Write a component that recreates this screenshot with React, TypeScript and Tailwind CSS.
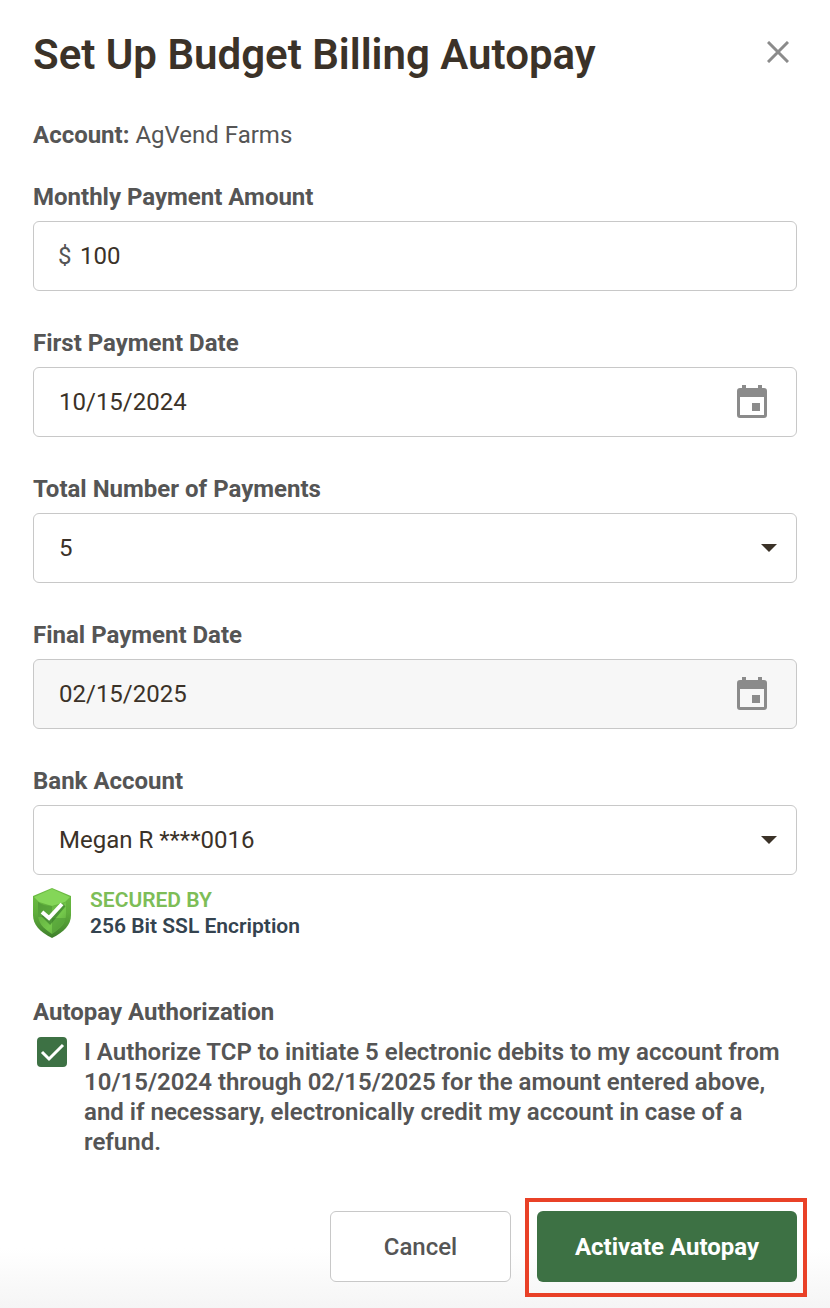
import { useState } from "react";
import type { ReactNode } from "react";

interface FieldProps {
  id: string;
  label: string;
  children: ReactNode;
}

const controlClass =
  "h-[70px] w-full rounded-md border border-[#c8c8c8] bg-white text-2xl text-[#3b3228] outline-none focus:border-[#3d7144]";

function Field({ id, label, children }: FieldProps) {
  return (
    <div>
      <label htmlFor={id} className="mb-2 block text-2xl leading-8 font-bold text-[#555555]">
        {label}
      </label>
      <div className="relative">{children}</div>
    </div>
  );
}

function CalendarIcon() {
  return (
    <svg viewBox="0 0 30 34" className="h-[34px] w-[30px]" aria-hidden="true">
      <path
        fill="#8b8b8b"
        fillRule="evenodd"
        d="M5 0h4v3h12V0h4v3h2a3 3 0 0 1 3 3v24a3 3 0 0 1-3 3H3a3 3 0 0 1-3-3V6a3 3 0 0 1 3-3h2zM3 12v18h24V12zM15 18h8v8h-8z"
      />
    </svg>
  );
}

interface DateFieldProps {
  id: string;
  label: string;
  value: string;
  disabled?: boolean;
}

function DateField({ id, label, value, disabled }: DateFieldProps) {
  return (
    <Field id={id} label={label}>
      <input
        id={id}
        type="text"
        defaultValue={value}
        disabled={disabled}
        className={`${controlClass} pr-20 pl-[25px] disabled:bg-[#f7f7f7]`}
      />
      <button
        type="button"
        aria-label={`Choose ${label}`}
        disabled={disabled}
        className="absolute inset-y-0 right-[30px] flex items-center"
      >
        <CalendarIcon />
      </button>
    </Field>
  );
}

interface SelectFieldProps {
  id: string;
  label: string;
  options: string[];
  value: string;
  onChange: (value: string) => void;
}

function SelectField({ id, label, options, value, onChange }: SelectFieldProps) {
  return (
    <Field id={id} label={label}>
      <select
        id={id}
        value={value}
        onChange={(e) => onChange(e.target.value)}
        className={`${controlClass} appearance-none pr-16 pl-[25px]`}
      >
        {options.map((option) => (
          <option key={option}>{option}</option>
        ))}
      </select>
      <svg
        viewBox="0 0 16 8"
        className="pointer-events-none absolute top-[31px] right-5 h-2 w-4"
        aria-hidden="true"
      >
        <path d="M0 0h16L8 8z" fill="#3b3228" />
      </svg>
    </Field>
  );
}

function ShieldIcon() {
  return (
    <svg viewBox="0 0 40 52" className="h-[52px] w-10" aria-hidden="true">
      <defs>
        <linearGradient id="shield-rim" x1="0" y1="0" x2="0" y2="1">
          <stop offset="0" stopColor="#6fbe45" />
          <stop offset="0.5" stopColor="#5fae3b" />
          <stop offset="1" stopColor="#3f7f2c" />
        </linearGradient>
        <linearGradient id="shield-face" x1="0" y1="0" x2="1" y2="1">
          <stop offset="0" stopColor="#5ba33a" />
          <stop offset="0.6" stopColor="#74c84b" />
          <stop offset="1" stopColor="#56a037" />
        </linearGradient>
      </defs>
      <path d="M19 1 38 9v19c0 10-7 17-19 23C7 45 0 38 0 28V9z" fill="url(#shield-rim)" />
      <path d="M19 2 37 10l-5 5-13 4-13-4-5-5z" fill="#84d658" />
      <path d="M5 15c4 3 9 4 14 4s10-1 14-4v12c0 9-5 14-14 20C10 41 5 36 5 27z" fill="url(#shield-face)" />
      <path d="M5 15c4 3 9 4 14 4v11H5z" fill="#4f9936" fillOpacity="0.6" />
      <path d="M19 31h14c-2 6-7 11-14 16z" fill="#4f9936" fillOpacity="0.6" />
      <path d="m10 28 7 7 14-17" fill="none" stroke="#34742a" strokeOpacity="0.6" strokeWidth="4" />
      <path d="m9 25 7 6 13-14" fill="none" stroke="#ffffff" strokeWidth="4" />
    </svg>
  );
}

export default function App() {
  const [payments, setPayments] = useState("5");
  const [bank, setBank] = useState("Megan R ****0016");
  const [authorized, setAuthorized] = useState(true);

  return (
    <main className="flex min-h-screen flex-col bg-white font-[Roboto,sans-serif] text-[#555555]">
      <header className="flex items-start justify-between px-[33px] pt-[27px]">
        <h1 className="text-[42px] leading-[56px] font-semibold text-[#3b3228]">
          Set Up Budget Billing Autopay
        </h1>
        <button type="button" aria-label="Close" className="mt-1.5 p-2">
          <svg viewBox="0 0 22 22" className="h-[22px] w-[22px]" aria-hidden="true">
            <path d="m1 1 20 20M21 1 1 21" stroke="#8b8b8b" strokeWidth="3" />
          </svg>
        </button>
      </header>

      <form className="flex grow flex-col" onSubmit={(e) => e.preventDefault()}>
        <div className="px-[33px] pt-9">
          <p className="mb-[30px] text-2xl leading-8">
            <strong className="font-bold">Account:</strong> AgVend Farms
          </p>

          <div className="flex flex-col gap-9">
            <Field id="amount" label="Monthly Payment Amount">
              <span className="absolute inset-y-0 left-[25px] flex items-center text-2xl">$</span>
              <input
                id="amount"
                type="text"
                inputMode="decimal"
                defaultValue="100"
                className={`${controlClass} bg-transparent pr-6 pl-[46px]`}
              />
            </Field>
            <DateField id="first-date" label="First Payment Date" value="10/15/2024" />
            <SelectField
              id="payments"
              label="Total Number of Payments"
              options={["3", "4", "5", "6", "12"]}
              value={payments}
              onChange={setPayments}
            />
            <DateField id="final-date" label="Final Payment Date" value="02/15/2025" disabled />
            <SelectField
              id="bank"
              label="Bank Account"
              options={["Megan R ****0016"]}
              value={bank}
              onChange={setBank}
            />
          </div>

          <div className="mt-3 flex items-center gap-[17px]">
            <ShieldIcon />
            <div className="text-[21px] leading-[26px] font-semibold">
              <p className="text-[#7dbd57]">SECURED BY</p>
              <p className="text-[#34434f]">256 Bit SSL Encription</p>
            </div>
          </div>

          <h2 className="mt-[57px] text-2xl leading-8 font-bold">Autopay Authorization</h2>
          <div className="mt-[9px] flex items-start gap-[17px] pl-1">
            <span className="relative block h-[30px] w-[30px] shrink-0">
              <input
                id="authorize"
                type="checkbox"
                checked={authorized}
                onChange={(e) => setAuthorized(e.target.checked)}
                className="peer block h-[30px] w-[30px] appearance-none rounded-sm border-2 border-[#3d7144] checked:bg-[#3d7144]"
              />
              <svg
                viewBox="0 0 30 30"
                className="pointer-events-none absolute inset-0 hidden peer-checked:block"
                aria-hidden="true"
              >
                <path d="m5 15 7 7L26 8" fill="none" stroke="#ffffff" strokeWidth="3" />
              </svg>
            </span>
            <label htmlFor="authorize" className="text-2xl leading-[30px] font-semibold">
              {`I Authorize TCP to initiate ${payments} electronic debits to my account from 10/15/2024 through 02/15/2025 for the amount entered above, and if necessary, electronically credit my account in case of a refund.`}
            </label>
          </div>
        </div>

        <footer className="mt-auto flex justify-end gap-[26px] bg-linear-to-b from-white from-60% to-[#f5f5f5] px-[33px] pt-[52px] pb-[26px]">
          <button
            type="button"
            className="h-[71px] w-[181px] rounded-md border border-[#c8c8c8] bg-white text-2xl font-medium"
          >
            Cancel
          </button>
          <div className="relative">
            <button
              type="submit"
              className="h-[71px] w-[260px] rounded-md bg-[#3d7144] text-2xl font-bold text-white"
            >
              Activate Autopay
            </button>
            <div className="pointer-events-none absolute -top-[13px] -right-[10px] -bottom-[15px] -left-3 border-4 border-[#e94127]" />
          </div>
        </footer>
      </form>
    </main>
  );
}
